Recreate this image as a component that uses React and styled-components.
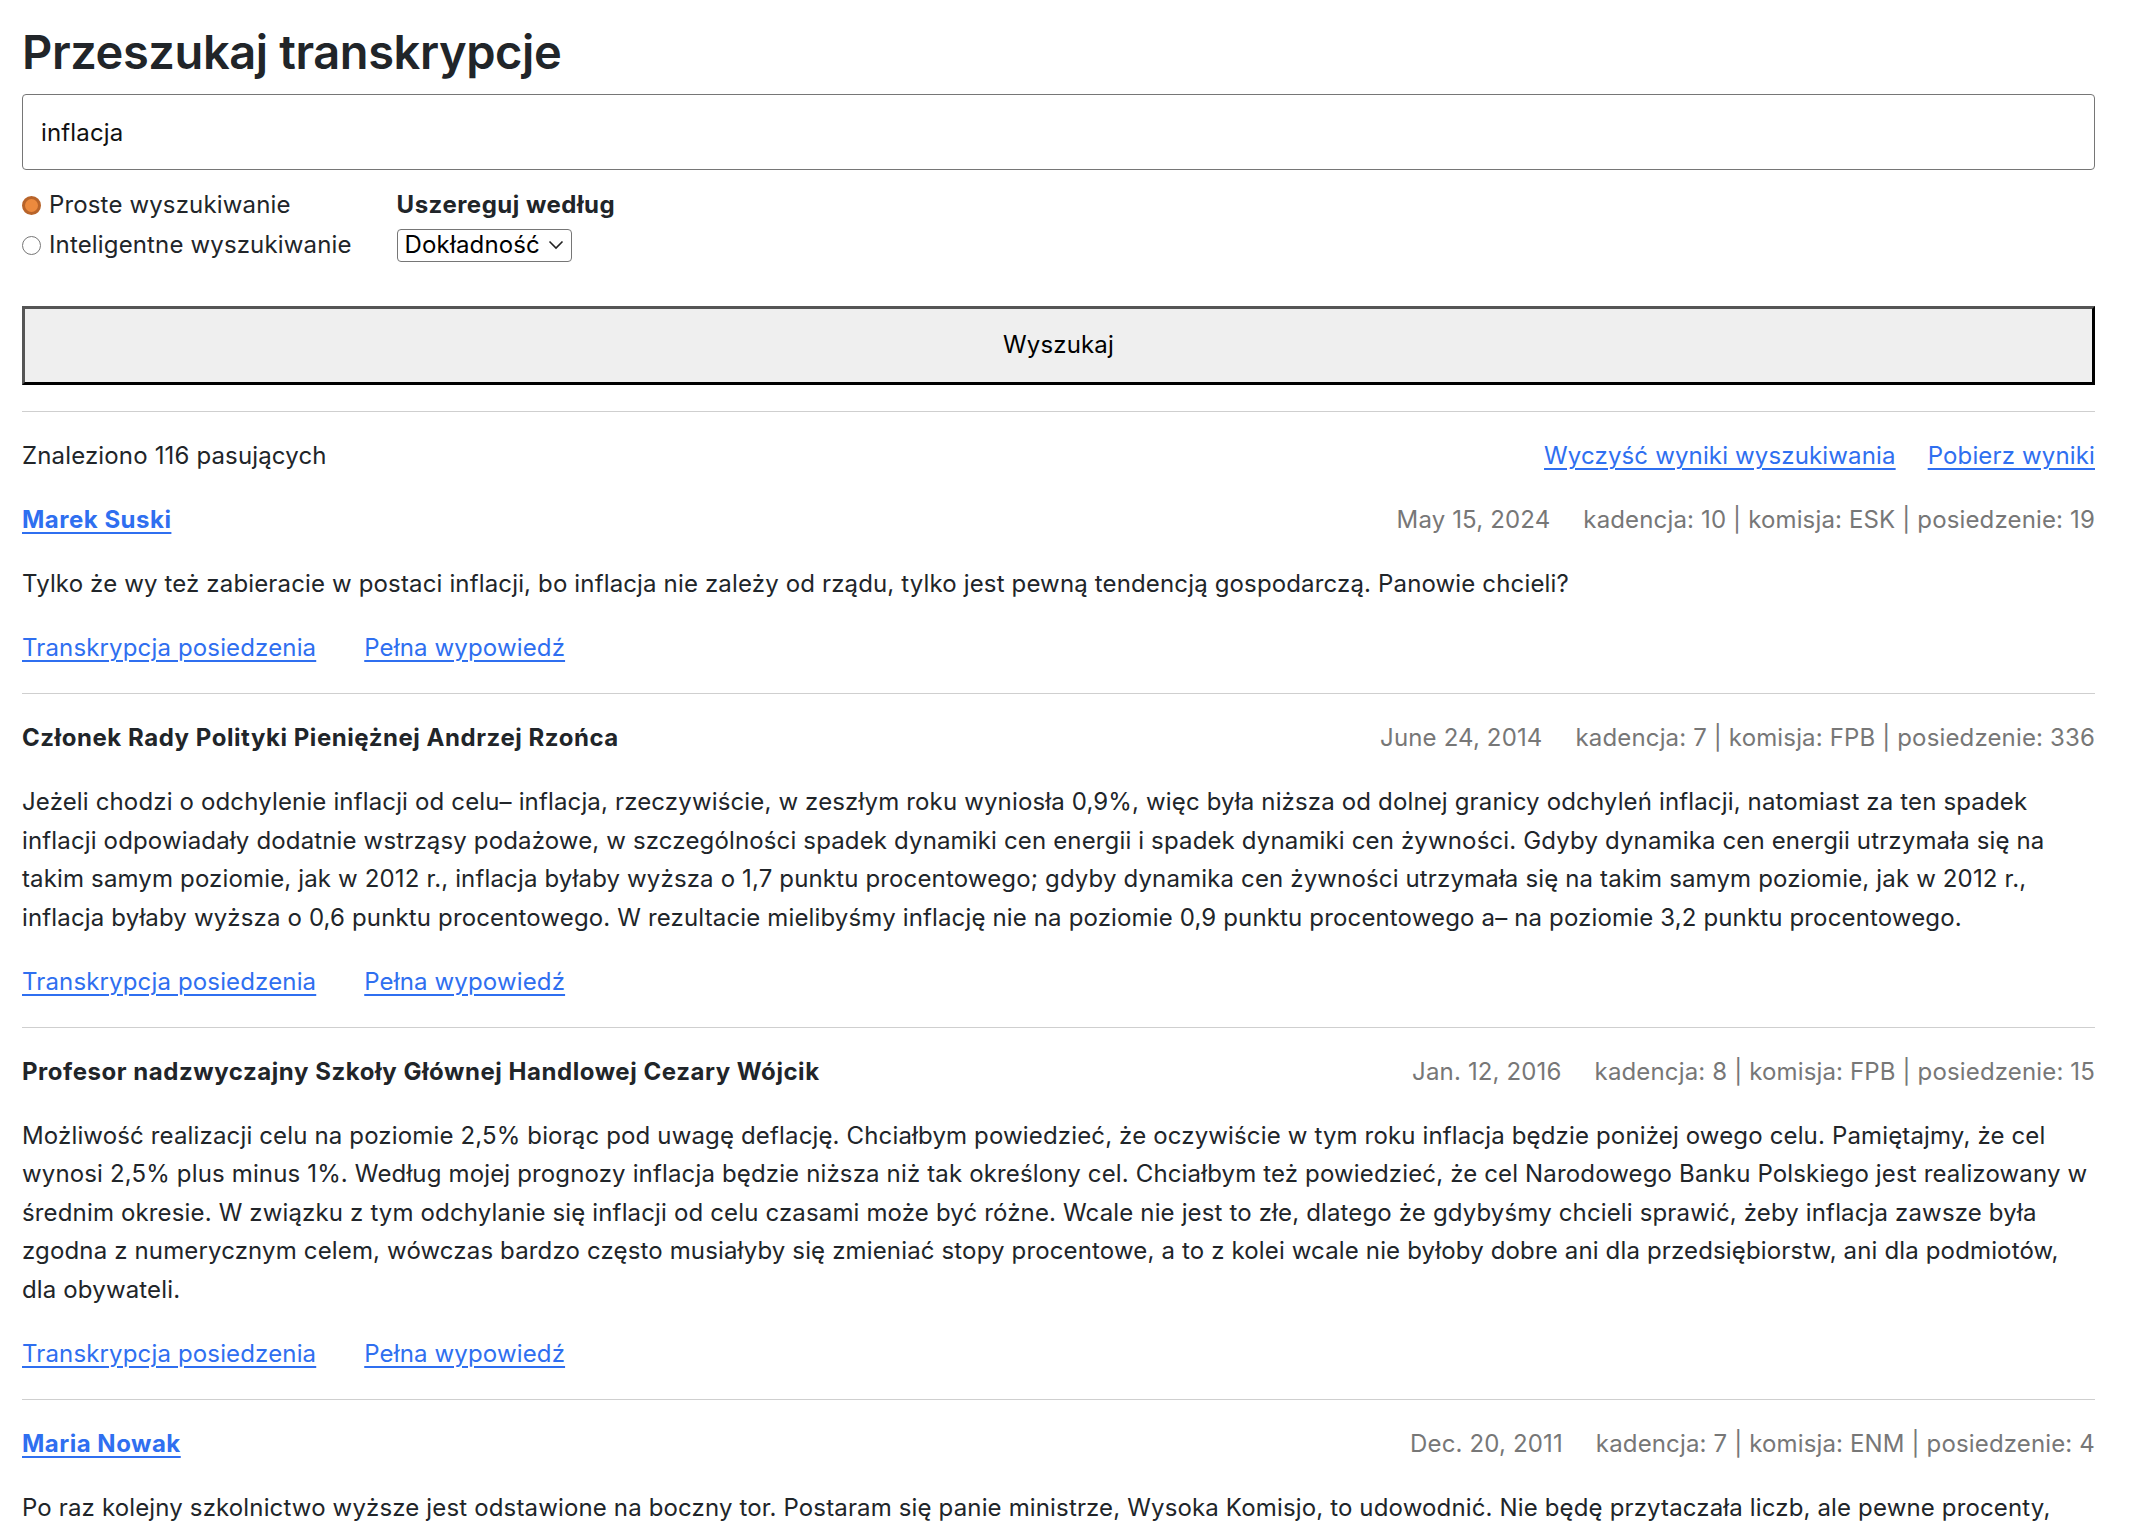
import React from 'react';
import styled, { createGlobalStyle } from 'styled-components';

const GlobalStyle = createGlobalStyle`
    html, body {
        margin: 0;
        padding: 0;
        background: #fff;
    }
    body {
        font-family: Inter, "Noto Sans", sans-serif;
        font-size: 24px;
        line-height: 1.6;
        letter-spacing: 0.15px;
        color: #212529;
    }
`;

const Page = styled.main`
    width: 2073px;
    padding: 22px 0 22px 22px;
`;

const Title = styled.h1`
    margin: 0 0 12px;
    font-size: 47px;
    line-height: 60px;
    font-weight: 600;
    letter-spacing: -0.4px;
`;

const SearchInput = styled.input`
    display: block;
    box-sizing: border-box;
    width: 100%;
    height: 76px;
    padding: 0 18px;
    border: 1px solid #767676;
    border-radius: 4px;
    font: inherit;
    letter-spacing: inherit;
    color: #111;
    outline: none;
`;

const Options = styled.div`
    display: flex;
    gap: 45px;
    margin-top: 15px;
`;

const Column = styled.div`
    display: flex;
    flex-direction: column;
`;

const RadioLabel = styled.label`
    display: flex;
    align-items: center;
    gap: 8px;
    height: 40px;
`;

const Radio = styled.input.attrs({ type: 'radio' })`
    appearance: none;
    flex: none;
    margin: 0;
    width: 19px;
    min-width: 19px;
    height: 19px;
    border-radius: 50%;
    box-sizing: border-box;
    border: 1.5px solid #777;
    background: #fff;

    &:checked {
        border: 3px solid #b8642a;
        background: #ec8a3e;
    }
`;

const SortTitle = styled.div`
    height: 40px;
    display: flex;
    align-items: center;
    font-weight: 700;
    letter-spacing: 0.5px;
`;

const SelectBox = styled.div`
    height: 40px;
    display: flex;
    align-items: center;
`;

const Select = styled.div`
    display: flex;
    align-items: center;
    gap: 8px;
    box-sizing: border-box;
    height: 33px;
    padding: 0 7px;
    border: 1px solid #767676;
    border-radius: 4px;
    color: #000;
`;

const SearchButton = styled.button`
    display: block;
    width: 100%;
    height: 79px;
    margin-top: 41px;
    box-sizing: border-box;
    background: #efefef;
    border-style: solid;
    border-width: 3px;
    border-color: #555 #000 #000 #555;
    font: inherit;
    letter-spacing: inherit;
    color: #000;
`;

const Divider = styled.hr`
    margin: 26px 0 25px;
    border: 0;
    border-top: 1.5px solid #cfcfcf;
`;

const Row = styled.div`
    display: flex;
    justify-content: space-between;
    align-items: center;
    line-height: 38.4px;
`;

const LinkGroup = styled.div`
    display: flex;
    gap: ${(p) => p.$gap}px;
`;

const Link = styled.a`
    color: #2f6ff0;
    text-decoration: underline;
    text-underline-offset: 4px;
    text-decoration-thickness: 1.5px;
    font-weight: ${(p) => (p.$bold ? 700 : 400)};
    letter-spacing: ${(p) => (p.$bold ? '0.5px' : 'inherit')};
    cursor: pointer;
`;

const Speaker = styled.span`
    font-weight: 700;
    letter-spacing: 0.55px;
`;

const Meta = styled.div`
    display: flex;
    gap: 33px;
    color: #777;
`;

const Result = styled.article`
    display: flex;
    flex-direction: column;
    gap: 25.6px;
    margin-top: ${(p) => (p.$first ? '25.6px' : '0')};
`;

const Text = styled.p`
    margin: 0;
    line-height: 38.4px;
`;

const results = [
    {
        name: 'Marek Suski',
        link: true,
        date: 'May 15, 2024',
        meta: 'kadencja: 10 | komisja: ESK | posiedzenie: 19',
        text: 'Tylko że wy też zabieracie w postaci inflacji, bo inflacja nie zależy od rządu, tylko jest pewną tendencją gospodarczą. Panowie chcieli?',
    },
    {
        name: 'Członek Rady Polityki Pieniężnej Andrzej Rzońca',
        date: 'June 24, 2014',
        meta: 'kadencja: 7 | komisja: FPB | posiedzenie: 336',
        text: 'Jeżeli chodzi o odchylenie inflacji od celu– inflacja, rzeczywiście, w zeszłym roku wyniosła 0,9%, więc była niższa od dolnej granicy odchyleń inflacji, natomiast za ten spadek inflacji odpowiadały dodatnie wstrząsy podażowe, w szczególności spadek dynamiki cen energii i spadek dynamiki cen żywności. Gdyby dynamika cen energii utrzymała się na takim samym poziomie, jak w 2012 r., inflacja byłaby wyższa o 1,7 punktu procentowego; gdyby dynamika cen żywności utrzymała się na takim samym poziomie, jak w 2012 r., inflacja byłaby wyższa o 0,6 punktu procentowego. W rezultacie mielibyśmy inflację nie na poziomie 0,9 punktu procentowego a– na poziomie 3,2 punktu procentowego.',
    },
    {
        name: 'Profesor nadzwyczajny Szkoły Głównej Handlowej Cezary Wójcik',
        date: 'Jan. 12, 2016',
        meta: 'kadencja: 8 | komisja: FPB | posiedzenie: 15',
        text: 'Możliwość realizacji celu na poziomie 2,5% biorąc pod uwagę deflację. Chciałbym powiedzieć, że oczywiście w tym roku inflacja będzie poniżej owego celu. Pamiętajmy, że cel wynosi 2,5% plus minus 1%. Według mojej prognozy inflacja będzie niższa niż tak określony cel. Chciałbym też powiedzieć, że cel Narodowego Banku Polskiego jest realizowany w średnim okresie. W związku z tym odchylanie się inflacji od celu czasami może być różne. Wcale nie jest to złe, dlatego że gdybyśmy chcieli sprawić, żeby inflacja zawsze była zgodna z numerycznym celem, wówczas bardzo często musiałyby się zmieniać stopy procentowe, a to z kolei wcale nie byłoby dobre ani dla przedsiębiorstw, ani dla podmiotów, dla obywateli.',
    },
    {
        name: 'Maria Nowak',
        link: true,
        date: 'Dec. 20, 2011',
        meta: 'kadencja: 7 | komisja: ENM | posiedzenie: 4',
        text: 'Po raz kolejny szkolnictwo wyższe jest odstawione na boczny tor. Postaram się panie ministrze, Wysoka Komisjo, to udowodnić. Nie będę przytaczała liczb, ale pewne procenty, które świadczą o tym, że sytuacja w szkolnictwie wyższym się pogarsza.',
    },
];

function Chevron() {
    return (
        <svg width="16" height="10" viewBox="0 0 16 10" fill="none">
            <path d="M1.5 1.5L8 8L14.5 1.5" stroke="#222" strokeWidth="1.6" />
        </svg>
    );
}

export default function App() {
    return (
        <>
            <GlobalStyle />
            <Page>
                <Title>Przeszukaj transkrypcje</Title>
                <SearchInput defaultValue="inflacja" />
                <Options>
                    <Column>
                        <RadioLabel>
                            <Radio name="mode" defaultChecked />
                            Proste wyszukiwanie
                        </RadioLabel>
                        <RadioLabel>
                            <Radio name="mode" />
                            Inteligentne wyszukiwanie
                        </RadioLabel>
                    </Column>
                    <Column>
                        <SortTitle>Uszereguj według</SortTitle>
                        <SelectBox>
                            <Select>
                                Dokładność
                                <Chevron />
                            </Select>
                        </SelectBox>
                    </Column>
                </Options>
                <SearchButton>Wyszukaj</SearchButton>
                <Divider />
                <Row>
                    <span>Znaleziono 116 pasujących</span>
                    <LinkGroup $gap={32}>
                        <Link>Wyczyść wyniki wyszukiwania</Link>
                        <Link>Pobierz wyniki</Link>
                    </LinkGroup>
                </Row>
                {results.map((r, i) => (
                    <React.Fragment key={r.name}>
                        {i > 0 && <Divider />}
                        <Result $first={i === 0}>
                            <Row>
                                {r.link ? <Link $bold>{r.name}</Link> : <Speaker>{r.name}</Speaker>}
                                <Meta>
                                    <span>{r.date}</span>
                                    <span>{r.meta}</span>
                                </Meta>
                            </Row>
                            <Text>{r.text}</Text>
                            <LinkGroup $gap={48}>
                                <Link>Transkrypcja posiedzenia</Link>
                                <Link>Pełna wypowiedź</Link>
                            </LinkGroup>
                        </Result>
                    </React.Fragment>
                ))}
            </Page>
        </>
    );
}
